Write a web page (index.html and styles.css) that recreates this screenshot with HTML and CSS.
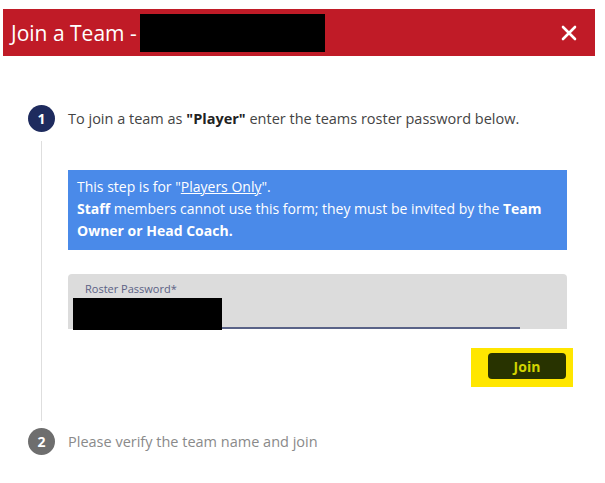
FILE: index.html
```html
<!DOCTYPE html>
<html>
<head>
<meta charset="utf-8">
<link rel="stylesheet" href="styles.css">
</head>
<body>
<div class="dialog">
  <div class="header">
    <div class="title">Join a Team - <span class="redact-title"></span></div>
    <div class="close">
      <svg width="16" height="16" viewBox="0 0 16 16"><path d="M2 2 L14 14 M14 2 L2 14" stroke="#fff" stroke-width="2.6" stroke-linecap="round"/></svg>
    </div>
  </div>
  <div class="steps">
    <div class="step">
      <div class="rail">
        <div class="num active">1</div>
        <div class="line"></div>
      </div>
      <div class="content">
        <div class="step-text">To join a team as <b>"Player"</b> enter the teams roster password below.</div>
        <div class="info">
          This step is for "<u>Players Only</u>".<br>
          <b>Staff</b> members cannot use this form; they must be invited by the <b>Team Owner or Head Coach.</b>
        </div>
        <div class="field">
          <div class="field-label">Roster Password*</div>
          <div class="field-row">
            <div class="redact-input"></div>
            <div class="underline"></div>
          </div>
        </div>
        <div class="actions">
          <div class="highlight"><button class="join">Join</button></div>
        </div>
      </div>
    </div>
    <div class="step last">
      <div class="rail">
        <div class="num muted">2</div>
      </div>
      <div class="content">
        <div class="step-text muted-text">Please verify the team name and join</div>
      </div>
    </div>
  </div>
</div>
</body>
</html>
```
FILE: styles.css
```css
* { box-sizing: border-box; }
body {
  margin: 0;
  background: #fff;
  font-family: "Open Sans", "Lato", sans-serif;
}
.dialog {
  width: 605px;
  height: 483px;
  padding: 9px 10px 0 3px;
}
.header {
  background: #c01b27;
  height: 47px;
  display: flex;
  align-items: center;
  justify-content: space-between;
  padding: 0 18px 0 8px;
}
.title {
  color: #fff;
  font-size: 21px;
  display: flex;
  align-items: center;
}
.redact-title {
  display: inline-block;
  width: 185px;
  height: 38px;
  background: #000;
  margin-left: 3px;
}
.close { display: flex; }
.steps {
  padding: 49px 0 0 25px;
}
.step {
  display: flex;
  gap: 13px;
}
.rail {
  width: 27px;
  flex: none;
  display: flex;
  flex-direction: column;
  align-items: center;
}
.num {
  width: 27px;
  height: 27px;
  border-radius: 50%;
  color: #fff;
  font-size: 14px;
  font-weight: 700;
  display: flex;
  align-items: center;
  justify-content: center;
  flex: none;
}
.num.active { background: #1e2b5e; }
.num.muted { background: #6e6e6e; }
.line {
  width: 1px;
  flex: 1;
  background: #dedede;
  margin: 9px 0 7px;
}
.content { flex: none; width: 499px; }
.step-text {
  font-size: 14.5px;
  color: #444;
  line-height: 27px;
}
.step-text b { color: #222; }
.muted-text { color: #8a8a8a; }
.info {
  margin-top: 38px;
  width: 499px;
  background: #4a8ae9;
  color: #fff;
  font-size: 14px;
  line-height: 22px;
  padding: 6px 10px 8px 9px;
}
.info u { text-decoration-thickness: 1px; }
.field {
  margin-top: 24px;
  width: 499px;
  height: 55px;
  background: #dcdcdc;
  border-radius: 4px 4px 0 0;
  padding: 8px 0 0 0;
  display: flex;
  flex-direction: column;
}
.field-label {
  font-size: 11px;
  color: #5b6185;
  padding-left: 17px;
  line-height: 14px;
}
.field-row {
  margin-top: auto;
  display: flex;
  align-items: flex-end;
  padding-left: 5px;
  margin-bottom: -1px;
}
.redact-input {
  width: 149px;
  height: 32px;
  background: #000;
}
.underline {
  width: 298px;
  height: 2px;
  background: #5a6388;
  margin-bottom: 1px;
}
.actions {
  display: flex;
  justify-content: flex-end;
  margin-top: 19px;
  margin-right: -6px;
  padding-bottom: 41px;
}
.highlight {
  background: #ffe600;
  padding: 5px 7px 8px 17px;
}
.join {
  display: block;
  width: 78px;
  height: 26px;
  background: #283300;
  border: none;
  border-radius: 4px;
  color: #d2d400;
  font-family: "Open Sans", sans-serif;
  font-weight: 700;
  font-size: 14px;
  padding: 0;
}
.step.last { align-items: center; }
```
